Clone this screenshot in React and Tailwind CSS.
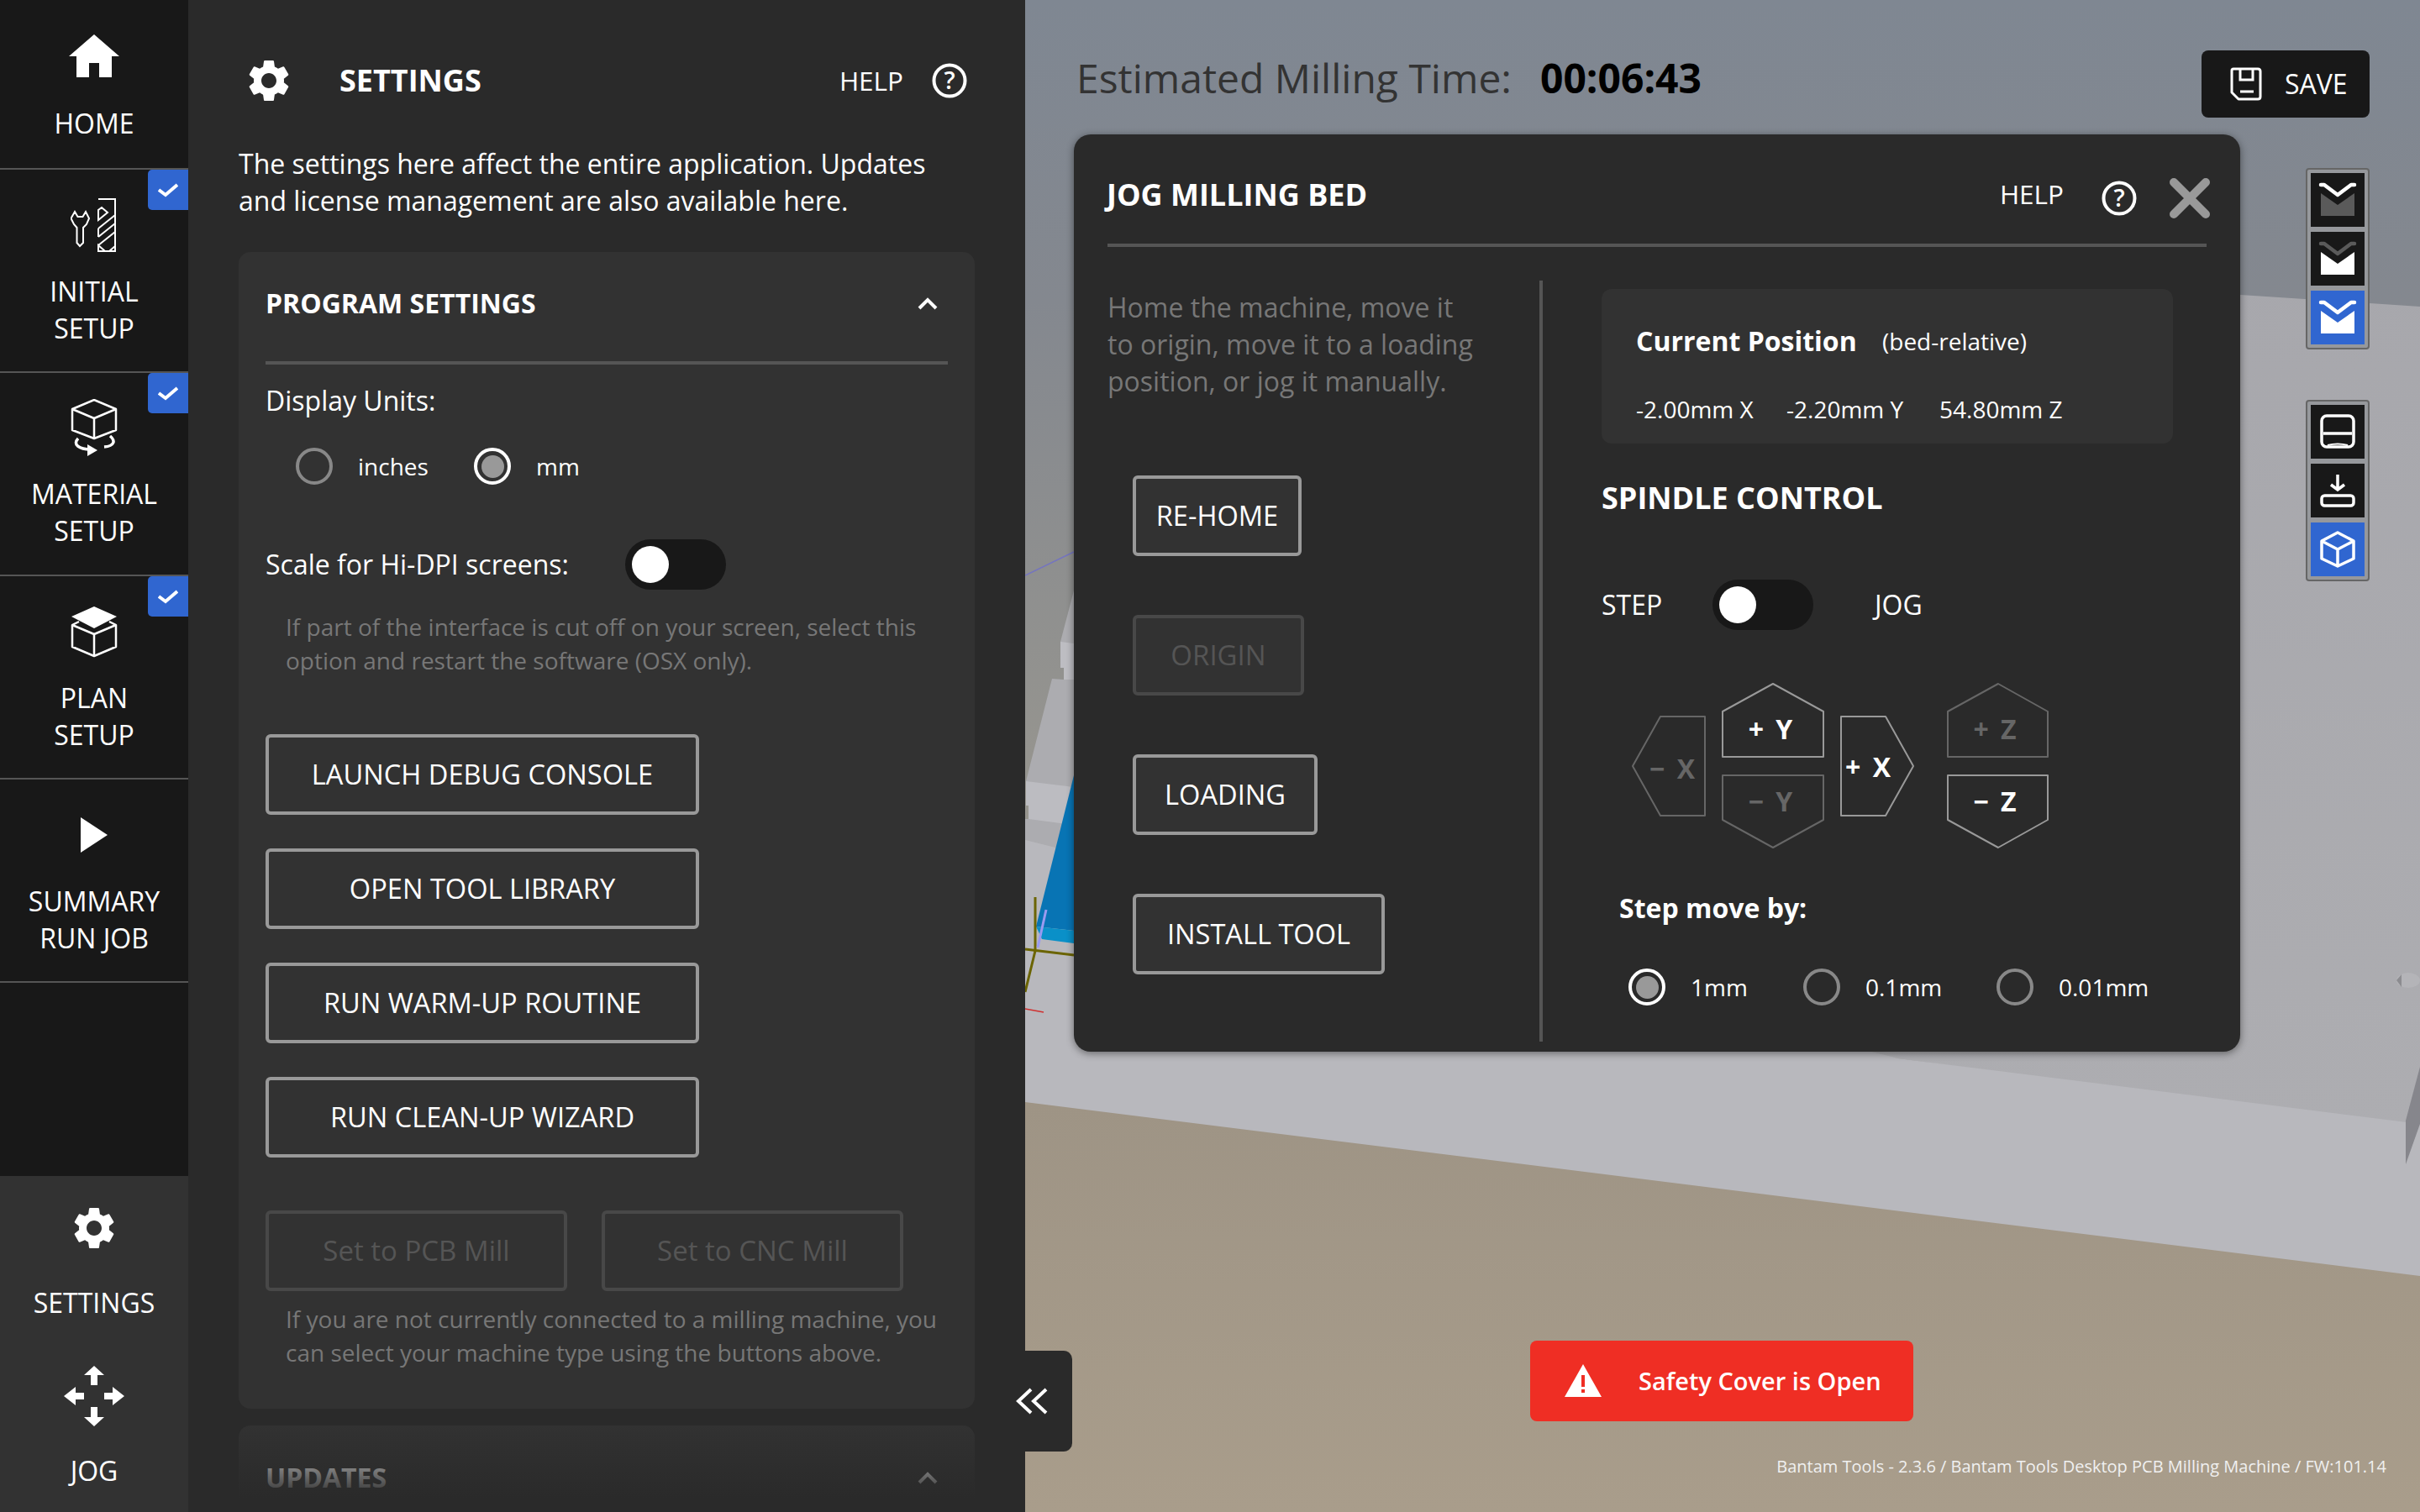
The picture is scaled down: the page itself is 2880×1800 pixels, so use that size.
import React from "react";
import { MdSettings } from "react-icons/md";

const HomeIcon = () => (
  <svg className="mt-[2px]" width="60" height="52" viewBox="0 0 60 52"><path d="M30 0 L60 26 H51 V51 H36 V34 H24 V51 H9 V26 H0 Z" fill="#fff" /></svg>
);
const ToolsIcon = () => (
  <svg className="ml-[3px]" width="60" height="64" viewBox="0 0 60 64" fill="none" stroke="#fff" strokeWidth="2">
    <path d="M5 18 L0.5 26 L4 33 L7.5 37 V55 L11 59 L15 55 V37 L19 33 L22 26 L18 18 L14.5 24 H8.5 Z" transform="translate(0 -2)" />
    <path d="M33 1 H53 V63 H33 V56 L41 63 M33 56 L53 40 M33 46 L53 30 M33 36 L53 20 M33 26 L44 17 L37 11 L33 14 Z M33 46 V36 M46 63 L53 57" />
  </svg>
);
const MaterialIcon = () => (
  <svg width="56" height="70" viewBox="0 0 56 70" fill="none" stroke="#fff">
    <path d="M28 1 L54 12 V37 L28 47 L2 37 V12 Z M2 12 L28 23 L54 12 M28 23 V47" strokeWidth="2.5" strokeLinejoin="round" />
    <path d="M9 47 C2 54 10 60 24 60 M40 57 C52 56 54 50 47 44" strokeWidth="3.5" />
    <path d="M20 54 L32 61 L20 68 Z" fill="#fff" stroke="none" />
  </svg>
);
const PlanIcon = () => (
  <svg width="56" height="62" viewBox="0 0 56 62" fill="none" stroke="#fff">
    <path d="M28 1 L55 13 L28 27 L1 13 Z" fill="#fff" stroke="none" />
    <path d="M10 19 L2 23 V49 L28 60 L54 49 V23 L46 19 M2 23 L28 34 L54 23 M28 34 V60" strokeWidth="2.5" strokeLinejoin="round" />
  </svg>
);
const PlayIcon = () => (
  <svg width="32" height="42" viewBox="0 0 32 42"><path d="M0 0 L32 21 L0 42 Z" fill="#fff" /></svg>
);
const JogIcon = () => (
  <svg width="72" height="72" viewBox="0 0 72 72" fill="#fff">
    <path d="M36 0 L48 11 H40 V23 H32 V11 H24 Z" />
    <path d="M36 72 L48 61 H40 V49 H32 V61 H24 Z" />
    <path d="M0 36 L14 25 V32 H24 V40 H14 V47 Z" />
    <path d="M72 36 L58 25 V32 H48 V40 H58 V47 Z" />
  </svg>
);
const Check = () => (
  <div className="absolute right-0 top-0 flex h-[48px] w-[48px] items-center justify-center rounded-bl-[5px] rounded-tl-[5px] bg-[#3066d0]">
    <svg width="24" height="18" viewBox="0 0 24 18" fill="none" stroke="#fff" strokeWidth="4"><path d="M1 9 L9 15 L23 3" /></svg>
  </div>
);

const NavItem = ({ icon, lines, check, h, labelClass = "" }) => (
  <div className={`relative flex flex-col items-center border-b-2 border-[#555] ${h}`}>
    {check && <Check />}
    <div className="flex h-[123px] items-center justify-center pt-[9px]">{icon}</div>
    <div className={`text-center text-[32px] leading-[44px] text-white ${labelClass}`}>
      {lines.map((l) => (<div key={l}>{l}</div>))}
    </div>
  </div>
);

const BottomItem = ({ icon, label }) => (
  <div className="flex h-[200px] flex-col items-center">
    <div className="flex h-[122px] items-center justify-center pt-[2px]">{icon}</div>
    <div className="mt-[7px] text-[32px] leading-[44px] text-white">{label}</div>
  </div>
);

const HelpCircle = () => (
  <svg width="42" height="42" viewBox="0 0 42 42" fill="none">
    <circle cx="21" cy="21" r="18.5" stroke="#fff" strokeWidth="4" />
    <text x="21" y="31" textAnchor="middle" fontSize="29" fontWeight="600" fill="#fff" fontFamily="'Open Sans',sans-serif">?</text>
  </svg>
);

const Radio = ({ on }) => (
  <div className={`flex h-[44px] w-[44px] shrink-0 items-center justify-center rounded-full border-[4px] ${on ? "border-white" : "border-[#888]"}`}>
    {on && <div className="h-[27px] w-[27px] rounded-full bg-[#999]" />}
  </div>
);

const Toggle = () => (
  <div className="flex h-[60px] w-[120px] shrink-0 items-center rounded-full bg-[#181818] pl-[8px]">
    <div className="h-[44px] w-[44px] rounded-full bg-white" />
  </div>
);

const Btn = ({ children, w, disabled }) => (
  <div className={`flex h-[96px] items-center justify-center rounded-[6px] border-[4px] bg-[#323232] font-medium ${w} ${disabled ? "border-[#484848] text-[33px] text-[#555]" : "border-[#999] text-[32.6px] text-white"}`}>
    {children}
  </div>
);

const Chevron = ({ color = "#fff" }) => (
  <svg width="26" height="16" viewBox="0 0 26 16" fill="none" stroke={color} strokeWidth="4"><path d="M3 14 L13 4 L23 14" /></svg>
);

const Layer = ({ top, bottom }) => (
  <svg width="64" height="64" viewBox="0 0 64 64" fill="none">
    <path d="M12 24 L32 38 L52 24 V51 H12 Z" fill={bottom} />
    <path d="M12 14 H16 L32 26 L48 14 H52" stroke={top} strokeWidth="4.5" strokeLinecap="round" strokeLinejoin="round" />
  </svg>
);

const ToolBtn = ({ blue, children }) => (
  <div className={`h-[64px] w-[64px] ${blue ? "bg-[#3066d0]" : "bg-[#181818]"}`}>{children}</div>
);

const Scene = () => (
  <svg className="absolute inset-0" width="1660" height="1800" viewBox="1220 0 1660 1800">
    <defs>
      <linearGradient id="sky" x1="0" y1="0" x2="0" y2="1">
        <stop offset="0" stopColor="#7f8792" />
        <stop offset="0.2" stopColor="#84888f" />
        <stop offset="0.55" stopColor="#98968f" />
        <stop offset="1" stopColor="#98968f" />
      </linearGradient>
      <linearGradient id="tan" x1="0" y1="0" x2="0" y2="1">
        <stop offset="0" stopColor="#9e9485" />
        <stop offset="1" stopColor="#a99d8b" />
      </linearGradient>
      <linearGradient id="plate" x1="0" y1="0" x2="0" y2="1">
        <stop offset="0" stopColor="#a7a7ac" />
        <stop offset="1" stopColor="#adadb1" />
      </linearGradient>
    </defs>
    <rect x="1220" y="0" width="1660" height="1800" fill="url(#sky)" />
    <polygon points="1278,703 1262,764 1262,795 1266,795 1266,809 1252,808 1221,930 1221,959 1224,959 1224,975 1220,975 1220,1400 1278,1400" fill="#acacb0" />
    <polygon points="1262,764 1278,766 1278,809 1266,809 1266,795 1262,795" fill="#bdbdc2" />
    <polygon points="1221,930 1278,937 1278,985 1262,980 1224,975 1224,959 1221,959" fill="#bcbcc1" />
    <polygon points="1278,260 2880,365 2880,1345 2259,1260 1278,1140" fill="url(#plate)" />
    <polygon points="1220,1000 2259,1260 2880,1338 2880,1600 1220,1400" fill="#b8b8bd" />
    <polygon points="1278,923 1233,1103 1278,1108" fill="#0874b4" />
    <polygon points="1233,1103 1278,1108 1278,1123 1240,1118" fill="#0a90c8" />
    <line x1="1220" y1="685" x2="1278" y2="657" stroke="#7474c0" strokeWidth="1.5" />
    <path d="M1232 1068 V1132 M1220 1130 L1278 1137 M1232 1132 L1220 1181" stroke="#6b6400" strokeWidth="3" fill="none" />
    <line x1="1245" y1="1083" x2="1235" y2="1128" stroke="#9a9af0" strokeWidth="3" />
    <line x1="1220" y1="1201" x2="1242" y2="1205" stroke="#d03030" strokeWidth="1.5" />
    <polygon points="1220,1312 2880,1519 2880,1800 1220,1800" fill="url(#tan)" />
    <polygon points="2863,1334 2880,1270 2880,1338 2863,1386" fill="#86868c" />
    <ellipse cx="2866" cy="1167" rx="14" ry="9" fill="#b4b4b8" />
    <path d="M2852 1167 L2858 1160 V1175 Z" fill="#8c8c90" />
  </svg>
);

const Hex = ({ points, t, x, y, on }) => (
  <g>
    <polygon points={points} fill="none" stroke={on ? "#999" : "#666"} strokeWidth="2" strokeLinejoin="round" />
    <text x={x} y={y} textAnchor="middle" fontSize="32" fontWeight="700" wordSpacing="6" fill={on ? "#fff" : "#666"} fontFamily="'Open Sans',sans-serif">{t}</text>
  </g>
);

const JogPad = () => (
  <svg className="ml-[34px] mt-[60px]" width="500" height="202" viewBox="1940 810 500 202">
    <Hex points="1943,912 1976,853 2029,853 2029,971 1976,971" t="− X" x="1990" y="927" />
    <Hex points="2050,847 2110,814 2170,847 2170,901 2050,901" t="+ Y" x="2107" y="880" on />
    <Hex points="2050,923 2170,923 2170,976 2110,1009 2050,976" t="− Y" x="2107" y="966" />
    <Hex points="2191,853 2244,853 2277,912 2244,971 2191,971" t="+ X" x="2223" y="925" on />
    <Hex points="2318,847 2378,814 2437,847 2437,901 2318,901" t="+ Z" x="2374" y="880" />
    <Hex points="2318,923 2437,923 2437,976 2378,1009 2318,976" t="− Z" x="2374" y="966" on />
  </svg>
);

const Sidebar = () => (
  <div className="flex h-full w-[224px] shrink-0 flex-col justify-between bg-[#181818]">
    <div>
      <NavItem h="h-[202px]" icon={<HomeIcon />} lines={["HOME"]} labelClass="mt-[2px]" />
      <NavItem h="h-[242px]" check icon={<ToolsIcon />} lines={["INITIAL", "SETUP"]} />
      <NavItem h="h-[242px]" check icon={<MaterialIcon />} lines={["MATERIAL", "SETUP"]} labelClass="mt-[-1px]" />
      <NavItem h="h-[242px]" check icon={<PlanIcon />} lines={["PLAN", "SETUP"]} />
      <NavItem h="h-[242px]" icon={<PlayIcon />} lines={["SUMMARY", "RUN JOB"]} />
    </div>
    <div className="h-[400px] bg-[#323232]">
      <BottomItem icon={<MdSettings size={60} color="#fff" />} label="SETTINGS" />
      <BottomItem icon={<JogIcon />} label="JOG" />
    </div>
  </div>
);

const SettingsPanel = () => (
  <div className="relative h-full w-[996px] shrink-0 overflow-hidden bg-[#2a2a2a] px-[60px] pt-[66px] text-white">
    <div className="flex h-[60px] items-center">
      <MdSettings size={60} color="#fff" className="ml-[6px]" />
      <div className="ml-[54px] text-[36px] font-bold">SETTINGS</div>
      <div className="ml-auto text-[31.5px]">HELP</div>
      <div className="ml-[34px] mr-[9px]"><HelpCircle /></div>
    </div>
    <p className="mt-[47px] whitespace-nowrap text-[32px] leading-[44px]">The settings here affect the entire application. Updates<br />and license management are also available here.</p>
    <div className="mt-[39px] h-[1377px] rounded-[14px] bg-[#323232] px-[32px]">
      <div className="flex h-[130px] items-center justify-between pb-[8px] pr-[11px]">
        <div className="text-[32px] font-bold">PROGRAM SETTINGS</div>
        <Chevron />
      </div>
      <div className="h-[4px] bg-[#555]" />
      <div className="mt-[21px] text-[32px] leading-[44px]">Display Units:</div>
      <div className="mt-[34px] flex h-[44px] items-center pl-[36px] text-[28px]">
        <Radio />
        <span className="ml-[30px] w-[138px]">inches</span>
        <Radio on />
        <span className="ml-[30px]">mm</span>
      </div>
      <div className="mt-[65px] flex h-[60px] items-center">
        <span className="w-[428px] text-[32px]">Scale for Hi-DPI screens:</span>
        <Toggle />
      </div>
      <p className="ml-[24px] mt-[24px] whitespace-nowrap text-[28px] leading-[40px] text-[#777]">If part of the interface is cut off on your screen, select this<br />option and restart the software (OSX only).</p>
      <div className="mt-[68px] flex flex-col gap-[40px]">
        <Btn w="w-[516px]">LAUNCH DEBUG CONSOLE</Btn>
        <Btn w="w-[516px]">OPEN TOOL LIBRARY</Btn>
        <Btn w="w-[516px]">RUN WARM-UP ROUTINE</Btn>
        <Btn w="w-[516px]">RUN CLEAN-UP WIZARD</Btn>
      </div>
      <div className="mt-[63px] flex gap-[41px]">
        <Btn w="w-[359px]" disabled>Set to PCB Mill</Btn>
        <Btn w="w-[359px]" disabled>Set to CNC Mill</Btn>
      </div>
      <p className="ml-[24px] mt-[13px] whitespace-nowrap text-[28px] leading-[40px] text-[#777]">If you are not currently connected to a milling machine, you<br />can select your machine type using the buttons above.</p>
    </div>
    <div className="mt-[20px] h-[200px] rounded-[14px] bg-[#323232] px-[32px]">
      <div className="flex h-[124px] items-center justify-between pr-[11px]">
        <div className="text-[32px] font-bold">UPDATES</div>
        <Chevron />
      </div>
    </div>
    <div className="absolute inset-x-0 bottom-0 h-[106px] bg-gradient-to-b from-[#2a2a2a00] to-[#2a2a2a] to-85%" />
  </div>
);

const JogModal = () => (
  <div className="absolute left-[58px] top-[160px] h-[1092px] w-[1388px] rounded-[20px] bg-[#2a2a2a] text-white shadow-[0_2px_10px_rgba(0,0,0,0.45)]">
    <div className="flex h-[130px] items-center pl-[39px] pr-[36px] pt-[22px]">
      <div className="mb-[8px] text-[36px] font-bold">JOG MILLING BED</div>
      <div className="mb-[11px] ml-auto text-[31.5px]">HELP</div>
      <div className="ml-[45px]"><HelpCircle /></div>
      <svg className="ml-[39px]" width="48" height="48" viewBox="0 0 48 48"><path d="M5 5 L43 43 M43 5 L5 43" stroke="#999" strokeWidth="10" strokeLinecap="round" /></svg>
    </div>
    <div className="mx-[40px] h-[4px] bg-[#555]" />
    <div className="mt-[40px] flex h-[906px] pl-[40px]">
      <div className="w-[514px] shrink-0 pt-[10px]">
        <p className="text-[32px] leading-[44px] text-[#777]">Home the machine, move it<br />to origin, move it to a loading<br />position, or jog it manually.</p>
        <div className="ml-[30px] mt-[90px] flex flex-col gap-[70px]">
          <Btn w="w-[201px]">RE-HOME</Btn>
          <Btn w="w-[204px]" disabled>ORIGIN</Btn>
          <Btn w="w-[220px]">LOADING</Btn>
          <Btn w="w-[300px]">INSTALL TOOL</Btn>
        </div>
      </div>
      <div className="w-[4px] shrink-0 bg-[#555]" />
      <div className="pl-[70px] pt-[10px]">
        <div className="h-[184px] w-[680px] rounded-[12px] bg-[#323232] pl-[41px] pt-[40px]">
          <div className="flex h-[44px] items-center">
            <span className="w-[293px] text-[32px] font-bold">Current Position</span>
            <span className="text-[28px]">(bed-relative)</span>
          </div>
          <div className="mt-[37px] flex h-[44px] items-center text-[28px]">
            <span className="w-[179px]">-2.00mm X</span>
            <span className="w-[182px]">-2.20mm Y</span>
            <span>54.80mm Z</span>
          </div>
        </div>
        <div className="mt-[43px] text-[36px] font-bold leading-[44px]">SPINDLE CONTROL</div>
        <div className="mt-[75px] flex h-[60px] items-center text-[32px]">
          <span className="w-[132px]">STEP</span>
          <Toggle />
          <span className="ml-[73px]">JOG</span>
        </div>
        <JogPad />
        <div className="ml-[21px] mt-[47px] text-[32px] font-bold leading-[44px]">Step move by:</div>
        <div className="ml-[32px] mt-[50px] flex h-[44px] items-center text-[28px]">
          <div className="flex w-[208px] items-center gap-[30px]"><Radio on /><span>1mm</span></div>
          <div className="flex w-[230px] items-center gap-[30px]"><Radio /><span>0.1mm</span></div>
          <div className="flex items-center gap-[30px]"><Radio /><span>0.01mm</span></div>
        </div>
      </div>
    </div>
  </div>
);

const Toolbar = ({ top, children }) => (
  <div className={`absolute right-[60px] flex flex-col gap-[6px] rounded-[4px] border-2 border-[#666] bg-[#96989c] p-[4px] ${top}`}>{children}</div>
);

const Viewport = () => (
  <div className="relative h-full flex-1 overflow-hidden">
    <Scene />
    <div className="absolute left-[61px] top-[58px] flex h-[70px] items-center whitespace-nowrap">
      <span className="text-[48px] text-[#333]">Estimated Milling Time:</span>
      <span className="ml-[34px] text-[48px] font-bold text-black">00:06:43</span>
    </div>
    <div className="absolute right-[60px] top-[60px] flex h-[80px] w-[200px] items-center rounded-[8px] bg-[#181818] pl-[34px] text-[32px] text-white">
      <svg width="38" height="40" viewBox="0 0 38 40" fill="none" stroke="#fff" strokeWidth="3">
        <path d="M4 2 H33 Q36 2 36 5 V35 Q36 38 33 38 H10 L2 30 V4 Q2 2 4 2 Z" strokeLinejoin="round" />
        <path d="M12 2 V15 H27 V2 M12 29 H28" />
      </svg>
      <span className="ml-[27px]">SAVE</span>
    </div>
    <JogModal />
    <Toolbar top="top-[200px]">
      <ToolBtn><Layer top="#fff" bottom="#5a5a5a" /></ToolBtn>
      <ToolBtn><Layer top="#5a5a5a" bottom="#fff" /></ToolBtn>
      <ToolBtn blue><Layer top="#fff" bottom="#fff" /></ToolBtn>
    </Toolbar>
    <Toolbar top="top-[476px]">
      <ToolBtn>
        <svg width="64" height="64" viewBox="0 0 64 64" fill="none" stroke="#fff" strokeWidth="3.5">
          <rect x="13" y="13" width="38" height="37" rx="6" />
          <path d="M15 34 H49" />
          <path d="M20 48 Q32 45 44 48" strokeWidth="2" />
        </svg>
      </ToolBtn>
      <ToolBtn>
        <svg width="64" height="64" viewBox="0 0 64 64" fill="none" stroke="#fff" strokeWidth="3.5">
          <path d="M32 13 V30 M24 25 L32 31 L40 25" />
          <rect x="13" y="38" width="38" height="12" rx="3.5" />
        </svg>
      </ToolBtn>
      <ToolBtn blue>
        <svg width="64" height="64" viewBox="0 0 64 64" fill="none" stroke="#fff" strokeWidth="3.5" strokeLinejoin="round">
          <path d="M32 12 L51 22 V43 L32 52 L13 43 V22 Z M13 22 L32 32 L51 22 M32 32 V52" />
        </svg>
      </ToolBtn>
    </Toolbar>
    <div className="absolute left-[601px] top-[1596px] flex h-[96px] w-[456px] items-center rounded-[8px] bg-[#ef2e24] pl-[41px] text-[29px] font-semibold text-white">
      <svg width="44" height="40" viewBox="0 0 44 40">
        <path d="M22 0 L44 39 H0 Z" fill="#fff" />
        <path d="M20 13 H24 V27 H20 Z M20 30 H24 V34 H20 Z" fill="#ef2e24" />
      </svg>
      <span className="ml-[44px]">Safety Cover is Open</span>
    </div>
    <div className="absolute right-[40px] top-[1732px] text-[20px] leading-[28px] text-[#f0f0f0]">Bantam Tools - 2.3.6 / Bantam Tools Desktop PCB Milling Machine / FW:101.14</div>
  </div>
);

export default function App() {
  return (
    <div className="relative flex h-[1800px] w-[2880px] overflow-hidden font-['Open_Sans',sans-serif]">
      <Sidebar />
      <SettingsPanel />
      <Viewport />
      <div className="absolute left-[1200px] top-[1608px] flex h-[120px] w-[76px] items-center justify-center rounded-r-[10px] bg-[#2a2a2a] pr-[18px]">
        <svg width="44" height="34" viewBox="0 0 44 34" fill="none" stroke="#fff" strokeWidth="4"><path d="M20 3 L5 17 L20 31 M38 3 L23 17 L38 31" /></svg>
      </div>
    </div>
  );
}
